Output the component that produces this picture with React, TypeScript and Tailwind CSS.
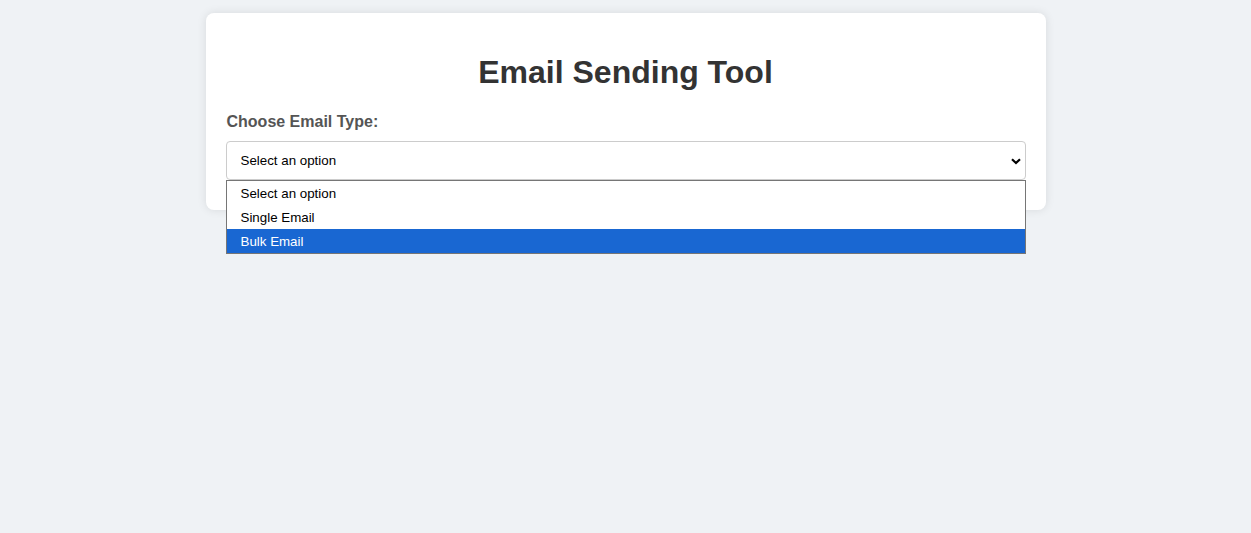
import { useState } from "react";

const options = ["Select an option", "Single Email", "Bulk Email"];

const App = () => {
  const [hovered] = useState(2);

  return (
    <div className="min-h-screen w-full bg-[#eff2f5] font-['Liberation_Sans',Arial,sans-serif] pt-[13px]">
      {/* Card */}
      <div className="mx-auto w-[840px] bg-white rounded-lg shadow-[0_0_10px_rgba(0,0,0,0.1)] px-5 pt-5 pb-5">
        <h1 className="my-[21px] text-center text-[32px] leading-[37px] font-bold text-[#333]">
          Email Sending Tool
        </h1>

        <label className="block mb-[10px] pt-[1px] pl-[1px] text-base leading-[18px] font-bold text-[#555]">
          Choose Email Type:
        </label>

        <div className="relative mb-[10px]">
          <div className="flex items-center justify-between h-[39px] pl-[14px] pr-[4px] border border-[#ccc] rounded text-[13.33px] text-black bg-white">
            <span>Select an option</span>
            <svg width="10" height="7" viewBox="0 0 10 7" className="mt-[1px]">
              <path d="M1 1.2 L5 5 L9 1.2" fill="none" stroke="#000" strokeWidth="2.2" />
            </svg>
          </div>

          {/* Open native dropdown list */}
          <div className="absolute left-0 right-0 top-[39px] z-10 border border-[#767676] bg-white">
            {options.map((o, i) => (
              <div
                key={o}
                className={
                  "h-6 flex items-center pl-[14px] pt-[2px] text-[13.33px] " +
                  (i === hovered ? "bg-[#1967d2] text-white" : "text-black")
                }
              >
                {o}
              </div>
            ))}
          </div>
        </div>
      </div>
    </div>
  );
};

export default App;
